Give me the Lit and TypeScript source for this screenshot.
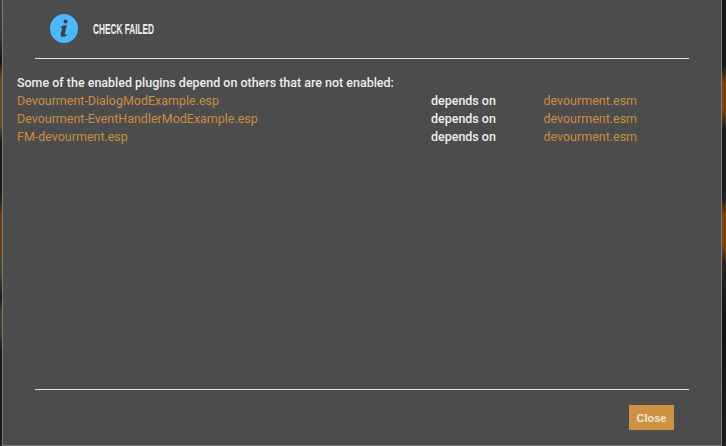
import { LitElement, html, css } from "lit";
import { customElement } from "lit/decorators.js";

const rows = [
  "Devourment-DialogModExample.esp",
  "Devourment-EventHandlerModExample.esp",
  "FM-devourment.esp",
];

@customElement("app-root")
export class AppRoot extends LitElement {
  static styles = css`
    :host {
      display: block;
      width: 726px;
      height: 446px;
      overflow: hidden;
      font-family: Roboto, "Liberation Sans", sans-serif;
    }
    .screen {
      display: flex;
      height: 446px;
      background: #161616;
    }
    .edge { flex: none; }
    .edge.left {
      width: 2px;
      background: linear-gradient(180deg, #3a3f44 0, #33383c 35px, #141414 62px, #6a4a20 78px, #6a4a20 125px, #1a1a1a 142px, #1a1a1a 195px, #6b3c10 215px, #70400f 248px, #3e4a2c 272px, #1c1c1c 298px, #3d4a30 316px, #36412c 333px, #1a1a1a 350px, #1c1c1c 446px);
    }
    .edge.right {
      width: 4px;
      background: linear-gradient(180deg, #161616 0, #161616 66px, #7a4208 84px, #7a4208 108px, #1c1a18 130px, #1c1c1c 198px, #7a4208 214px, #7c4409 245px, #2a2520 262px, #1c1c1c 290px, #111 320px, #1c1c1c 446px);
    }
    .dialog {
      flex: 1;
      box-sizing: border-box;
      height: 446px;
      display: flex;
      flex-direction: column;
      background: #4c4c4c;
      border-left: 1px solid #7a7a7a;
      border-right: 1px solid #7a7a7a;
      border-bottom: 1px solid #7a7a7a;
      color: #eeeeee;
    }
    .header {
      display: flex;
      align-items: center;
      height: 58px;
      margin: 0 32px;
      padding-left: 15px;
      border-bottom: 1px solid #e6e6e6;
    }
    .header svg { display: block; margin-top: -1px; flex: none; }
    .title {
      margin-left: 15px;
      margin-top: -1px;
      font-family: "Liberation Sans", sans-serif;
      font-size: 14px;
      font-weight: 700;
      color: #eeeeee;
      text-transform: uppercase;
      transform: scaleX(0.59);
      transform-origin: left center;
    }
    .body {
      flex: 1;
      padding: 15px 0 0 14px;
      font-size: 12.48px;
      line-height: 18px;
    }
    .lead { font-weight: 500; }
    .grid {
      display: grid;
      grid-template-columns: 414px 112.5px auto;
    }
    .link { color: #c98f43; }
    .dep { font-weight: 500; }
    .footer {
      margin: 0 32px;
      height: 40px;
      border-top: 1px solid #e6e6e6;
      display: flex;
      justify-content: flex-end;
      align-items: flex-start;
      padding: 15px 15px 0 0;
    }
    button {
      width: 45px;
      height: 25px;
      border: none;
      padding: 0;
      background: #cd9343;
      color: #f0e6d6;
      font-family: "Liberation Sans", sans-serif;
      font-weight: 700;
      font-size: 11px;
    }
  `;

  render() {
    return html`
      <div class="screen">
        <div class="edge left"></div>
        <div class="dialog">
          <div class="header">
            <svg width="28" height="29" viewBox="0 0 28 29">
              <ellipse cx="14" cy="14.5" rx="14" ry="14.5" fill="#4db8ff"></ellipse>
              <circle cx="15.5" cy="7.5" r="2" fill="#3a3f45"></circle>
              <path d="M10.5 13.2 C12 11.6 15 11 16.8 11.6 L14.8 19.6 C14.6 20.8 15.2 21 16.8 20 L17.1 21 C15.4 23 10.8 23.8 10.6 21 C10.6 20 12 15.6 12.2 14 C12 13.3 11.4 13.4 10.8 14 Z" fill="#3a3f45"></path>
            </svg>
            <div class="title">Check Failed</div>
          </div>
          <div class="body">
            <div class="lead">Some of the enabled plugins depend on others that are not enabled:</div>
            <div class="grid">
              ${rows.map(
                (r) => html`
                  <div class="link">${r}</div>
                  <div class="dep">depends on</div>
                  <div class="link">devourment.esm</div>
                `
              )}
            </div>
          </div>
          <div class="footer"><button>Close</button></div>
        </div>
        <div class="edge right"></div>
      </div>
    `;
  }
}
